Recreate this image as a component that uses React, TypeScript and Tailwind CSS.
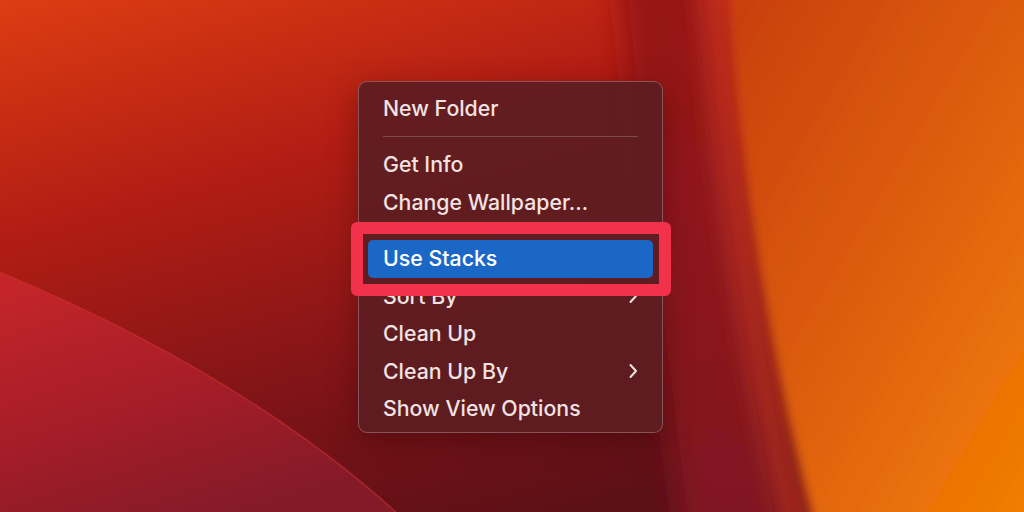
import type { ReactNode } from 'react'

const font = { fontFamily: 'Inter, "Noto Sans", Arial, sans-serif' }

function Wallpaper() {
  return (
    <svg className="absolute inset-0" width="1024" height="512" viewBox="0 0 1024 512">
      <defs>
        <linearGradient id="base" x1="0" y1="0" x2="0.55" y2="1">
          <stop offset="0" stopColor="#dd3d12" />
          <stop offset="0.35" stopColor="#b31d14" />
          <stop offset="0.75" stopColor="#7a1318" />
          <stop offset="1" stopColor="#5c1016" />
        </linearGradient>
        <linearGradient id="ridge" x1="0" y1="0" x2="0" y2="1">
          <stop offset="0" stopColor="#9a1816" />
          <stop offset="1" stopColor="#7e1422" />
        </linearGradient>
        <linearGradient id="orange" x1="0" y1="0" x2="1" y2="1">
          <stop offset="0" stopColor="#c63c10" />
          <stop offset="0.45" stopColor="#dc5c0e" />
          <stop offset="1" stopColor="#f98700" />
        </linearGradient>
        <linearGradient id="wave" x1="0" y1="0" x2="0.5" y2="1">
          <stop offset="0" stopColor="#c8262a" />
          <stop offset="0.55" stopColor="#a71d28" />
          <stop offset="1" stopColor="#841a28" />
        </linearGradient>
        <filter id="soft" filterUnits="userSpaceOnUse" x="-200" y="-200" width="1424" height="912">
          <feGaussianBlur stdDeviation="14" />
        </filter>
        <filter id="softer" filterUnits="userSpaceOnUse" x="-200" y="-200" width="1424" height="912">
          <feGaussianBlur stdDeviation="5" />
        </filter>
      </defs>
      <rect width="1024" height="512" fill="url(#base)" />
      <path d="M615,-40 C 635,150 655,340 685,560 L790,560 C 752,340 722,150 708,-40 Z" fill="url(#ridge)" filter="url(#soft)" />
      <path d="M714,-40 C 726,140 752,350 806,560" stroke="#c53422" strokeWidth="22" fill="none" filter="url(#soft)" />
      <path d="M726,-40 C 736,140 764,350 824,560 L1080,560 L1080,-40 Z" fill="url(#orange)" filter="url(#softer)" />
      <path d="M-10,268 Q 250,375 410,525 L-10,525 Z" fill="url(#wave)" />
      <path d="M-10,268 Q 250,375 410,525" stroke="#d43430" strokeWidth="1.5" fill="none" opacity="0.5" />
    </svg>
  )
}

function Chevron() {
  return (
    <svg width="10" height="16" viewBox="0 0 10 16" className="mr-[15px]">
      <polyline points="2.5,2 8,8 2.5,14" fill="none" stroke="#efe2e1" strokeWidth="2" strokeLinecap="round" strokeLinejoin="round" />
    </svg>
  )
}

function Item({ children, sub, active }: { children: ReactNode; sub?: boolean; active?: boolean }) {
  return (
    <div
      className={`mx-[9px] flex h-[37.5px] items-center justify-between rounded-[5px] pl-[15px] ${
        active ? 'bg-[#1b67c6] text-white' : 'text-[#f1e3e2]'
      }`}
    >
      <span>{children}</span>
      {sub && <Chevron />}
    </div>
  )
}

function Separator() {
  return (
    <div className="flex h-[18.75px] items-center px-[24px]">
      <div className="h-px w-full bg-white/20" />
    </div>
  )
}

export default function App() {
  return (
    <div className="relative h-[512px] w-[1024px] overflow-hidden" style={font}>
      <Wallpaper />
      <div className="relative pl-[358px] pt-[81px]">
        <div className="relative h-[352px] w-[305px] rounded-[9px] border border-white/25 bg-[#5c1d21]/[0.93] pt-[8px] text-[21.3px] font-medium leading-none shadow-[0_8px_30px_rgba(40,0,0,0.35)]">
          <Item>New Folder</Item>
          <Separator />
          <Item>Get Info</Item>
          <Item>Change Wallpaper…</Item>
          <Separator />
          <Item active>Use Stacks</Item>
          <Item sub>Sort By</Item>
          <Item>Clean Up</Item>
          <Item sub>Clean Up By</Item>
          <Item>Show View Options</Item>

          <div className="absolute left-[-8px] top-[140px] h-[74px] w-[320px] rounded-[6px] border-[12px] border-[#f2324a]" />
        </div>
      </div>
    </div>
  )
}
